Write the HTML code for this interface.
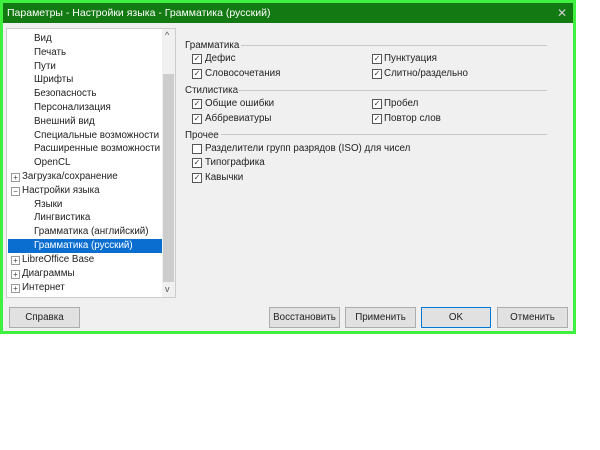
<!DOCTYPE html>
<html><head><meta charset="utf-8"><style>
body{margin:0;width:600px;height:450px;background:#fff;font-family:"Liberation Sans","DejaVu Sans",sans-serif;font-size:9.8px;color:#000;position:relative;overflow:hidden}
.win{position:absolute;left:0;top:0;width:570px;height:328px;border:3px solid #3ff03f;background:#f0f0f0}
.title{position:absolute;left:0;top:0;width:570px;height:20px;background:#137a13;color:#fff;font-size:10.5px;line-height:20px}
.title span{position:absolute;left:4px}
.title b{position:absolute;right:6px;font-weight:normal;font-size:12px;color:#cfcfcf}
.tree{position:absolute;left:3px;top:25px;width:168px;height:268px;background:#fff;border:1px solid #ccc}
.sb{position:absolute;right:0;top:0;width:13px;height:268px;background:#f0f0f0}
.thumb{position:absolute;left:1px;top:45px;width:11px;height:208px;background:#cdcdcd}
.r{position:absolute;left:0;height:14px;line-height:14px;white-space:nowrap;color:#222}
.sel{background:#0a6ed1;color:#fff;width:154px}
.a{position:absolute;font-size:9px;color:#555}
.pl{position:absolute;width:7px;height:7px;border:1px solid #999;font-size:8px;line-height:7px;text-align:center;color:#444}
.t{position:absolute;white-space:nowrap;color:#222}
.cb{position:absolute;width:8px;height:8px;border:1px solid #555;background:#fff;font-size:8px;line-height:8px;text-align:center;color:#333}
.ln{position:absolute;height:1px;background:#c8c8c8}
.btn{position:absolute;top:304px;height:19px;background:#e1e1e1;border:1px solid #adadad;text-align:center;line-height:19px;color:#222}
</style></head><body>
<div class="win">
<div class="title"><span>Параметры - Настройки языка - Грамматика (русский)</span><b>✕</b></div>
<div class="tree">
<div class="r" style="top:3px;left:27px">Вид</div>
<div class="r" style="top:17px;left:27px">Печать</div>
<div class="r" style="top:31px;left:27px">Пути</div>
<div class="r" style="top:44px;left:27px">Шрифты</div>
<div class="r" style="top:58px;left:27px">Безопасность</div>
<div class="r" style="top:72px;left:27px">Персонализация</div>
<div class="r" style="top:86px;left:27px">Внешний вид</div>
<div class="r" style="top:100px;left:27px">Специальные возможности</div>
<div class="r" style="top:113px;left:27px">Расширенные возможности</div>
<div class="r" style="top:127px;left:27px">OpenCL</div>
<div class="pl" style="top:144px;left:4px">+</div><div class="r" style="top:141px;left:15px">Загрузка/сохранение</div>
<div class="pl" style="top:158px;left:4px">−</div><div class="r" style="top:155px;left:15px">Настройки языка</div>
<div class="r" style="top:169px;left:27px">Языки</div>
<div class="r" style="top:182px;left:27px">Лингвистика</div>
<div class="r" style="top:196px;left:27px">Грамматика (английский)</div>
<div class="r sel" style="top:210px;left:1px"><span style="padding-left:26px">Грамматика (русский)</span></div>
<div class="pl" style="top:227px;left:4px">+</div><div class="r" style="top:224px;left:15px">LibreOffice Base</div>
<div class="pl" style="top:241px;left:4px">+</div><div class="r" style="top:238px;left:15px">Диаграммы</div>
<div class="pl" style="top:255px;left:4px">+</div><div class="r" style="top:252px;left:15px">Интернет</div>
<div class="sb"><div class="a" style="left:3px;top:1px">^</div><div class="thumb"></div><div class="a" style="left:3px;top:255px">v</div></div>
</div>
<div class="t" style="left:182px;top:37px">Грамматика</div><div class="ln" style="left:238px;top:42px;width:306px"></div>
<div class="cb" style="left:189px;top:51px">✓</div><div class="t" style="left:202px;top:50px">Дефис</div>
<div class="cb" style="left:189px;top:66px">✓</div><div class="t" style="left:202px;top:65px">Словосочетания</div>
<div class="cb" style="left:369px;top:51px">✓</div><div class="t" style="left:381px;top:50px">Пунктуация</div>
<div class="cb" style="left:369px;top:66px">✓</div><div class="t" style="left:381px;top:65px">Слитно/раздельно</div>
<div class="t" style="left:182px;top:82px">Стилистика</div><div class="ln" style="left:232px;top:87px;width:312px"></div>
<div class="cb" style="left:189px;top:96px">✓</div><div class="t" style="left:202px;top:95px">Общие ошибки</div>
<div class="cb" style="left:189px;top:111px">✓</div><div class="t" style="left:202px;top:110px">Аббревиатуры</div>
<div class="cb" style="left:369px;top:96px">✓</div><div class="t" style="left:381px;top:95px">Пробел</div>
<div class="cb" style="left:369px;top:111px">✓</div><div class="t" style="left:381px;top:110px">Повтор слов</div>
<div class="t" style="left:182px;top:127px">Прочее</div><div class="ln" style="left:218px;top:131px;width:326px"></div>
<div class="cb" style="left:189px;top:141px"></div><div class="t" style="left:202px;top:140px">Разделители групп разрядов (ISO) для чисел</div>
<div class="cb" style="left:189px;top:155px">✓</div><div class="t" style="left:202px;top:154px">Типографика</div>
<div class="cb" style="left:189px;top:170px">✓</div><div class="t" style="left:202px;top:169px">Кавычки</div>
<div class="btn" style="left:6px;width:69px">Справка</div>
<div class="btn" style="left:266px;width:69px">Восстановить</div>
<div class="btn" style="left:342px;width:69px">Применить</div>
<div class="btn" style="left:418px;width:68px;border:1px solid #0078d7">OK</div>
<div class="btn" style="left:494px;width:69px">Отменить</div>
</div>
</body></html>
